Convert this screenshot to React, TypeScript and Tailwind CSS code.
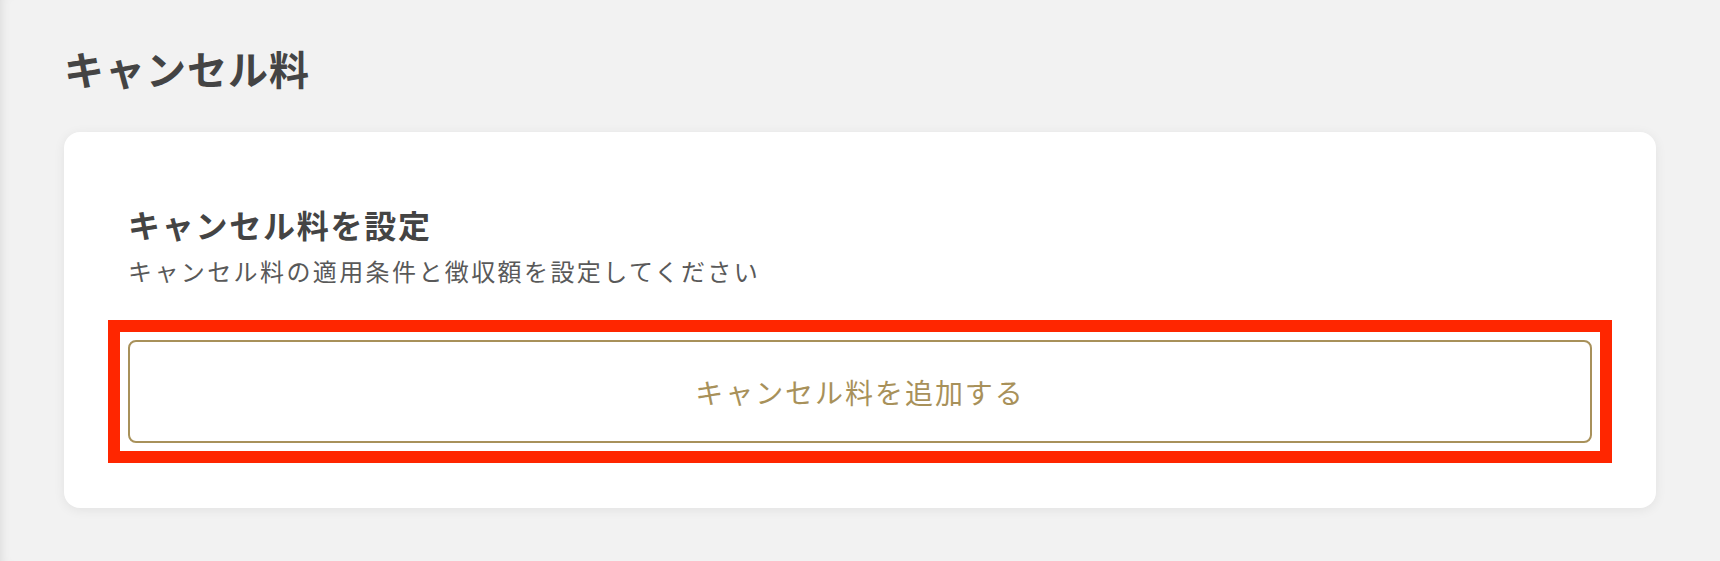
const jp = { fontFamily: '"Noto Sans CJK JP", "Noto Sans", sans-serif' }

function AddCancelFeeButton() {
  return (
    <div className="relative mt-[51px]">
      <button
        type="button"
        className="flex h-[103px] w-full items-center justify-center rounded-lg border-2 border-[#a8915a] bg-white text-[28px] tracking-[0.07em] text-[#a8915a]"
      >
        キャンセル料を追加する
      </button>
      {/* annotation highlight */}
      <div className="pointer-events-none absolute -inset-5 border-[12px] border-[#ff2600]" />
    </div>
  )
}

export default function App() {
  return (
    <div
      className="min-h-[561px] bg-[#f2f2f2] px-16 pt-[38px] shadow-[inset_10px_0_12px_-10px_rgba(0,0,0,0.12)]"
      style={jp}
    >
      <h1 className="text-[40px] font-bold leading-[60px] tracking-[0.025em] text-[#444444]">
        キャンセル料
      </h1>

      <section className="mt-[34px] rounded-2xl bg-white px-16 pb-[65px] pt-[68px] shadow-[0_2px_12px_rgba(0,0,0,0.07)]">
        <h2 className="text-[32px] font-bold leading-[48px] tracking-[0.055em] text-[#444444]">
          キャンセル料を設定
        </h2>
        <p className="mt-[5px] text-[24px] leading-[36px] tracking-[0.1em] text-[#595959]">
          キャンセル料の適用条件と徴収額を設定してください
        </p>
        <AddCancelFeeButton />
      </section>
    </div>
  )
}
